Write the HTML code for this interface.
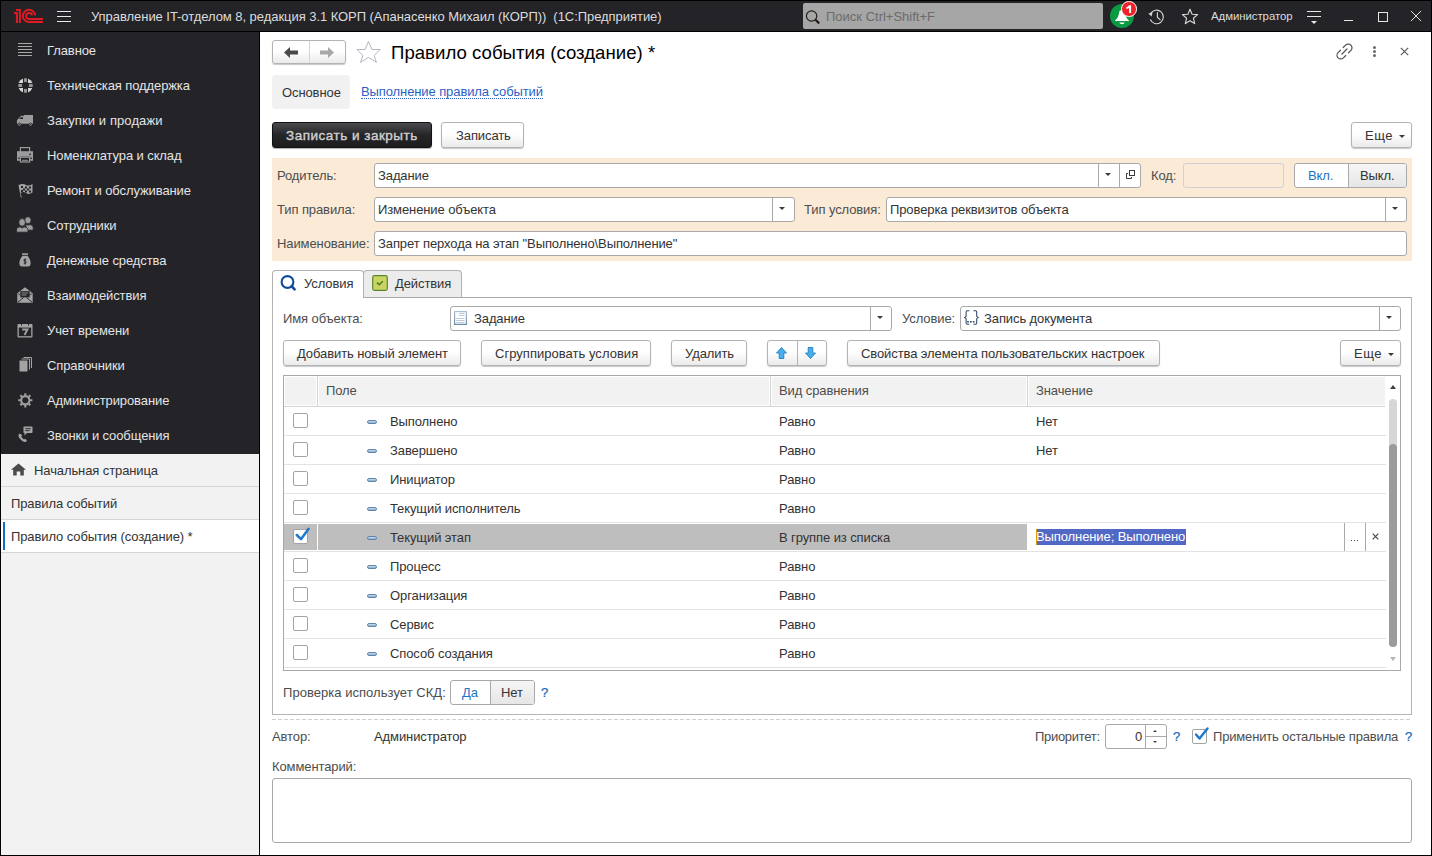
<!DOCTYPE html>
<html><head><meta charset="utf-8">
<style>
*{box-sizing:border-box;margin:0;padding:0}
html,body{width:1432px;height:856px;overflow:hidden;background:#000}
body{font-family:"Liberation Sans",sans-serif;font-size:13px;line-height:15px;color:#333;position:relative;letter-spacing:-0.1px}
.a{position:absolute}
svg{position:absolute;overflow:visible}
#top{left:1px;top:1px;width:1430px;height:30px;background:#232328}
#side{left:1px;top:32px;width:258px;height:422px;background:#232328}
#sidelow{left:1px;top:454px;width:258px;height:401px;background:#f2f2f2}
#main{left:260px;top:32px;width:1171px;height:823px;background:#fff}
.tt{color:#dcdcdc;white-space:nowrap;letter-spacing:-0.05px}
.si{position:absolute;color:#e4e4e4;white-space:nowrap;left:47px}
.lbl{position:absolute;color:#4d4d4d;white-space:nowrap}
.txt{position:absolute;color:#333;white-space:nowrap}
.inp{position:absolute;background:#fff;border:1px solid #a9a9a9;border-radius:3px}
.btn{position:absolute;background:linear-gradient(#fff 0%,#fff 45%,#ebebeb 100%);border:1px solid #b3b3b3;border-radius:3px;box-shadow:0 1px 1px rgba(0,0,0,.22);color:#333;white-space:nowrap}
.btn span{position:absolute;top:5px;white-space:nowrap}
.dd{position:absolute;top:-1px;bottom:-1px;width:22px;border-left:1px solid #a9a9a9}
.tri{position:absolute;width:0;height:0;border-left:3px solid transparent;border-right:3px solid transparent;border-top:3.5px solid #3a3a3a}
.row{position:absolute;left:284px;width:1102px;height:29px;border-bottom:1px solid #e3e3e3}
.cb{position:absolute;left:9px;top:6px;width:15px;height:15px;border:1px solid #a3a3a3;border-radius:2px;background:#fff}
.dsh{position:absolute;left:83px;top:13px;width:10px;height:4px;background:linear-gradient(#cfe0ee 0%,#86abcb 100%);border:1px solid #5d87aa;border-radius:2px}
.fn{position:absolute;left:106px;top:7px;color:#333;white-space:nowrap}
.vs{position:absolute;left:495px;top:7px;color:#333;white-space:nowrap}
.vl{position:absolute;left:752px;top:7px;color:#333;white-space:nowrap}
.q{position:absolute;color:#1266b8;white-space:nowrap;-webkit-text-stroke:0.2px #1266b8}
</style></head><body>
<div id="top" class="a"></div>
<div id="side" class="a"></div>
<div id="sidelow" class="a"></div>
<div id="main" class="a"></div>

<!-- 1C logo -->
<svg style="left:0;top:0" width="50" height="30" viewBox="0 0 50 30"><g fill="none" stroke="#e01b22" stroke-width="2" stroke-linejoin="miter">
<path d="M16 10 H19.9 V23"/><path d="M14 13 H16.9 V23"/>
<path d="M35.1 15.4 A6.1 6.1 0 1 0 29.2 22 H43"/>
<path d="M32.1 15.4 A3 3 0 1 0 29.2 19 H43"/>
</g></svg>
<!-- hamburger -->
<div class="a" style="left:57px;top:11px;width:14px;height:1px;background:#e8e8e8"></div>
<div class="a" style="left:57px;top:16px;width:14px;height:1px;background:#e8e8e8"></div>
<div class="a" style="left:57px;top:21px;width:14px;height:1px;background:#e8e8e8"></div>
<div class="a tt" style="left:91px;top:9px">Управление IT-отделом 8, редакция 3.1 КОРП (Апанасенко Михаил (КОРП))&nbsp; (1С:Предприятие)</div>
<!-- search -->
<div class="a" style="left:803px;top:3px;width:300px;height:26px;background:#a6a6a6;border-radius:2px"></div>
<svg style="left:805px;top:10px" width="16" height="14" viewBox="0 0 16 14"><circle cx="6.6" cy="6" r="5.2" fill="none" stroke="#1e1e1e" stroke-width="1.2"/><path d="M10.4 9.8 L14.2 13.4" stroke="#1e1e1e" stroke-width="2.2"/></svg>
<div class="a" style="left:826px;top:9px;color:#6b6b6b;font-size:13px;white-space:nowrap;letter-spacing:0">Поиск Ctrl+Shift+F</div>
<!-- bell -->
<div class="a" style="left:1110px;top:4px;width:24px;height:24px;border-radius:50%;background:#0a9a42"></div>
<svg style="left:1110px;top:4px" width="24" height="24" viewBox="0 0 24 24"><path d="M9.3 7.5 Q9.5 6 12 6 Q14.5 6 14.7 7.5 Q15 13 19 16.6 V17.1 H5 V16.6 Q9 13 9.3 7.5 Z" fill="#fff"/><path d="M9.2 18.6 H14.8 Q14 20.2 12 20.2 Q10 20.2 9.2 18.6 Z" fill="#fff"/></svg>
<div class="a" style="left:1121px;top:1px;width:15.5px;height:15.5px;border-radius:50%;background:#ee2228;border:1.3px solid #fff"></div>
<svg style="left:1124.6px;top:4px" width="8" height="10" viewBox="0 0 8 10"><path d="M4.1 1.2 H6.1 V8.9 H4.1 V3.9 Q3 4.6 1.3 4.9 V3.2 Q3.2 2.6 4.1 1.2 Z" fill="#fff"/></svg>
<!-- history -->
<svg style="left:1147px;top:8px" width="18" height="18" viewBox="0 0 18 18"><path d="M3.6 5.6 A6.8 6.8 0 1 1 3.3 11.6" fill="none" stroke="#d6d6d6" stroke-width="1.15"/><path d="M1.3 5.6 L5.6 4.2 L4.6 8.4 Z" fill="#d6d6d6"/><path d="M10.4 4.2 V9.2 L13.5 12.2" fill="none" stroke="#d6d6d6" stroke-width="1.15"/></svg>
<!-- star -->
<svg style="left:1181px;top:8px" width="18" height="17" viewBox="0 0 18 17"><path d="M9 1.2 L11.1 6.3 L16.6 6.6 L12.4 10.2 L13.7 15.6 L9 12.7 L4.3 15.6 L5.6 10.2 L1.4 6.6 L6.9 6.3 Z" fill="none" stroke="#d6d6d6" stroke-width="1.15" stroke-linejoin="round"/></svg>
<div class="a tt" style="left:1211px;top:9px;font-size:11.4px">Администратор</div>
<!-- filter icon -->
<div class="a" style="left:1307px;top:11px;width:14px;height:1px;background:#e6e6e6"></div>
<div class="a" style="left:1307px;top:16px;width:14px;height:1px;background:#e6e6e6"></div>
<div class="a" style="left:1311px;top:21px;width:0;height:0;border-left:3px solid transparent;border-right:3px solid transparent;border-top:3px solid #e6e6e6"></div>
<!-- window controls -->
<div class="a" style="left:1344px;top:20px;width:9px;height:1px;background:#e6e6e6"></div>
<div class="a" style="left:1378px;top:12px;width:10px;height:10px;border:1px solid #e6e6e6"></div>
<svg style="left:1410px;top:10px" width="12" height="12" viewBox="0 0 12 12"><path d="M1 1 L11 11 M11 1 L1 11" stroke="#e6e6e6" stroke-width="1"/></svg>
<div class="si" style="top:43px">Главное</div>
<div class="si" style="top:78px">Техническая поддержка</div>
<div class="si" style="top:113px;letter-spacing:0.1px">Закупки и продажи</div>
<div class="si" style="top:148px">Номенклатура и склад</div>
<div class="si" style="top:183px">Ремонт и обслуживание</div>
<div class="si" style="top:218px">Сотрудники</div>
<div class="si" style="top:253px">Денежные средства</div>
<div class="si" style="top:288px">Взаимодействия</div>
<div class="si" style="top:323px">Учет времени</div>
<div class="si" style="top:358px">Справочники</div>
<div class="si" style="top:393px">Администрирование</div>
<div class="si" style="top:428px">Звонки и сообщения</div>
<!-- sidebar icons -->
<svg style="left:18px;top:43px" width="14" height="14" viewBox="0 0 14 14"><g stroke="#a8a8a8" stroke-width="1"><path d="M0 0.5H14M0 3.5H14M0 6.5H14M0 9.5H14M0 12.5H14"/></g></svg>
<svg style="left:18px;top:78px" width="15" height="15" viewBox="0 0 15 15"><circle cx="7.5" cy="7.5" r="7.3" fill="#d6d6d6"/><rect x="5" y="0" width="5" height="15" fill="#232328"/><rect x="0" y="5" width="15" height="5" fill="#232328"/><g fill="#959595"><rect x="6" y="0.3" width="3" height="3.8"/><rect x="6" y="10.9" width="3" height="3.8"/><rect x="0.3" y="6" width="3.8" height="3"/><rect x="10.9" y="6" width="3.8" height="3"/></g></svg>
<svg style="left:14px;top:110px" width="22" height="20" viewBox="0 0 22 20"><path d="M2.9 10.2 L7.2 5.8 H10 V5 H19 V13.8 H2.9 Z" fill="#9c9c9c"/><path d="M6.9 7.2 H9 V9 H5.2 Z" fill="#232328"/><g fill="#9c9c9c" stroke="#232328" stroke-width="0.7"><circle cx="5.4" cy="14.6" r="1.5"/><circle cx="16.5" cy="14.6" r="1.5"/></g><circle cx="5.4" cy="14.6" r="0.5" fill="#232328"/><circle cx="16.5" cy="14.6" r="0.5" fill="#232328"/></svg>
<svg style="left:14px;top:144px" width="22" height="20" viewBox="0 0 22 20"><rect x="6.4" y="3.6" width="9.2" height="5" fill="none" stroke="#9c9c9c" stroke-width="1.2"/><rect x="3" y="7.2" width="16" height="9.6" fill="#9c9c9c"/><rect x="5.8" y="12.6" width="10.4" height="6" fill="#232328"/><rect x="6.4" y="13.2" width="9.2" height="4.8" fill="none" stroke="#9c9c9c" stroke-width="1.2"/><rect x="8" y="15.8" width="6" height="1" fill="#9c9c9c"/><rect x="15.3" y="9.6" width="1.5" height="1.5" fill="#232328"/><rect x="4.2" y="13.6" width="1.4" height="1.4" fill="#232328"/><rect x="16.4" y="13.6" width="1.4" height="1.4" fill="#232328"/></svg>
<svg style="left:18px;top:183px" width="15" height="15" viewBox="0 0 15 15"><path d="M0.5 2 Q5 0 8 2 Q11 3.5 14.5 1 V9.5 Q11 12 8 10 Q5 8 2.5 10 L3.8 14.5 L2.8 14.5 Z" fill="#a3a3a3"/><g fill="#232328"><rect x="3" y="3" width="2" height="2"/><rect x="7" y="3.5" width="2" height="2"/><rect x="11" y="3.5" width="2" height="2"/><rect x="5" y="5.5" width="2" height="2"/><rect x="9" y="5.5" width="2" height="2"/><rect x="3" y="7" width="2" height="2"/><rect x="7" y="7.5" width="2" height="2"/><rect x="11" y="7.5" width="2" height="2"/></g></svg>
<svg style="left:14px;top:214px" width="22" height="22" viewBox="0 0 22 22"><g fill="#9c9c9c" stroke="#232328" stroke-width="0.8"><ellipse cx="13.9" cy="6.2" rx="3.2" ry="3.5"/><path d="M11.5 10.6 Q13.9 11.4 16.3 10.6 Q19.2 11.4 19.2 13.2 V16.2 H13 Z"/><ellipse cx="8.1" cy="8.4" rx="3.3" ry="3.8"/><path d="M2.6 18.2 V15.2 Q2.8 13.3 6 12.8 L8.1 14 L10.2 12.8 Q13.6 13.3 14 15.2 V18.2 Z"/></g></svg>
<svg style="left:19px;top:253px" width="12" height="14" viewBox="0 0 12 14"><rect x="3" y="0.3" width="6" height="1.6" fill="#a3a3a3"/><path d="M3.5 2.8 H8.5 Q12 7 11.6 11 Q11.5 13.5 9 13.5 H3 Q0.5 13.5 0.4 11 Q0 7 3.5 2.8 Z" fill="#a3a3a3"/><path d="M7.3 6.8 Q6 6 4.9 6.9 Q4.5 8 6 8.3 Q7.5 8.7 7.2 9.8 Q6 10.8 4.7 10 M6 5.5 V11.5" fill="none" stroke="#232328" stroke-width="0.9"/></svg>
<svg style="left:17px;top:287px" width="16" height="16" viewBox="0 0 16 16"><path d="M0.3 6.3 L8 0.3 L15.7 6.3 V15.7 H0.3 Z" fill="#a3a3a3"/><rect x="3.3" y="4.2" width="9.4" height="6.2" fill="#232328"/><path d="M4.6 6 H11.2 M4.6 8 H9.5" stroke="#8c8c8c" stroke-width="1"/><path d="M0.8 15.2 L6.6 10.6 M15.2 15.2 L9.4 10.6" stroke="#232328" stroke-width="0.9"/><path d="M1.2 6.6 L3.3 8.3 M14.8 6.6 L12.7 8.3" stroke="#232328" stroke-width="0.8"/></svg>
<svg style="left:17px;top:322px" width="16" height="16" viewBox="0 0 16 16"><rect x="0.5" y="2" width="15" height="13.5" rx="1" fill="#a3a3a3"/><rect x="1.8" y="5.6" width="12.4" height="8.6" fill="#232328"/><path d="M4.5 0 V3.5 M11.5 0 V3.5" stroke="#232328" stroke-width="1"/><path d="M5.2 7.5 H10.5 L7.5 13" fill="none" stroke="#a3a3a3" stroke-width="1.8"/></svg>
<svg style="left:19px;top:357px" width="15" height="15" viewBox="0 0 15 15"><rect x="0.5" y="3.5" width="8" height="11" fill="#a3a3a3"/><path d="M2.5 2 H10.5 V12.5 M4.5 0.5 H12.5 V11" fill="none" stroke="#a3a3a3" stroke-width="1"/></svg>
<svg style="left:18px;top:392.5px" width="15" height="15" viewBox="0 0 15 15"><g stroke="#9c9c9c" stroke-width="2.1"><path d="M7.3 0.2V14.4M0.2 7.3H14.4M2.3 2.3L12.3 12.3M12.3 2.3L2.3 12.3"/></g><circle cx="7.3" cy="7.3" r="4.1" fill="none" stroke="#9c9c9c" stroke-width="2.2"/><circle cx="7.3" cy="7.3" r="3" fill="#232328"/></svg>
<svg style="left:17px;top:426px" width="16" height="17" viewBox="0 0 16 17"><path d="M2.8 7.5 Q0.5 9 2 11.5 Q4 14.8 7 16 Q9 16.5 10 14.8 L8.3 12.8 L7 13.5 Q5 12.3 4.2 10.2 L5.3 9.2 Z" fill="#a3a3a3"/><rect x="6.5" y="0.5" width="9" height="6.5" rx="0.8" fill="#a3a3a3"/><path d="M7.5 7 L7.5 9.5 L10 7 Z" fill="#a3a3a3"/><path d="M8.3 2.7 H13.8 M8.3 4.6 H12.5" stroke="#232328" stroke-width="0.9"/></svg>

<!-- open windows -->
<svg style="left:11px;top:463px" width="15" height="13" viewBox="0 0 15 13"><path d="M7.5 0.5 L15 6.8 H12.8 V12.5 H9.3 V8.5 H5.7 V12.5 H2.2 V6.8 H0 Z" fill="#4a4a4a"/></svg>
<div class="txt" style="left:34px;top:463px">Начальная страница</div>
<div class="a" style="left:1px;top:486px;width:258px;height:1px;background:#d6d6d6"></div>
<div class="txt" style="left:11px;top:496px">Правила событий</div>
<div class="a" style="left:1px;top:519px;width:258px;height:1px;background:#d6d6d6"></div>
<div class="a" style="left:1px;top:520px;width:258px;height:32px;background:#fff"></div>
<div class="a" style="left:3px;top:522px;width:2px;height:28px;background:#0d6fc9"></div>
<div class="txt" style="left:11px;top:529px">Правило события (создание) *</div>
<div class="a" style="left:1px;top:552px;width:258px;height:1px;background:#d6d6d6"></div>

<!-- nav -->
<div class="btn" style="left:272px;top:40px;width:74px;height:24px"></div>
<div class="a" style="left:309px;top:41px;width:1px;height:22px;background:#d4d4d4"></div>
<svg style="left:284px;top:47px" width="14" height="11" viewBox="0 0 14 11"><path d="M0 5.5 L6 0 V3.5 H14 V7.5 H6 V11 Z" fill="#4a4a4a"/></svg>
<svg style="left:320px;top:47px" width="14" height="11" viewBox="0 0 14 11"><path d="M14 5.5 L8 0 V3.5 H0 V7.5 H8 V11 Z" fill="#a8a8a8"/></svg>
<svg style="left:357px;top:41px" width="24" height="22" viewBox="0 0 24 22"><path d="M11.5 0.6 L15 8.5 H23 L17.2 14.5 L19.4 21.4 L11.5 16.4 L3.6 21.4 L5.8 14.5 L0 8.5 H8 Z" fill="none" stroke="#aeb6c0" stroke-width="1" stroke-linejoin="miter"/></svg>
<div class="a" style="left:391px;top:42px;font-size:18.6px;line-height:21px;color:#000;white-space:nowrap;letter-spacing:0.02px">Правило события (создание) *</div>
<!-- right icons -->
<svg style="left:1336px;top:43px" width="17" height="17" viewBox="0 0 17 17"><g fill="none" stroke="#555" stroke-width="1.25" stroke-linecap="round"><path d="M7.2 4.5 L9.6 2.1 A2.7 2.7 0 0 1 14.9 7.4 L12.5 9.8"/><path d="M9.8 12.5 L7.4 14.9 A2.7 2.7 0 0 1 2.1 9.6 L4.5 7.2"/><path d="M6 11 L11 6"/></g></svg>
<div class="a" style="left:1373px;top:46px;width:3.4px;height:3.4px;border-radius:50%;background:#6a6a6a"></div>
<div class="a" style="left:1373px;top:50px;width:3.4px;height:3.4px;border-radius:50%;background:#6a6a6a"></div>
<div class="a" style="left:1373px;top:54px;width:3.4px;height:3.4px;border-radius:50%;background:#6a6a6a"></div>
<svg style="left:1400px;top:47px" width="9" height="9" viewBox="0 0 9 9"><path d="M0.8 0.8 L8.2 8.2 M8.2 0.8 L0.8 8.2" stroke="#555" stroke-width="1.1"/></svg>
<!-- section tabs -->
<div class="a" style="left:272px;top:75px;width:78px;height:34px;background:#f1f1f1;border-radius:4px"></div>
<div class="txt" style="left:282px;top:85px">Основное</div>
<div class="a" style="left:361px;top:85px;color:#2d5fc4;white-space:nowrap;border-bottom:1px dotted #2d5fc4;line-height:13px">Выполнение правила событий</div>
<!-- command bar -->
<div class="a" style="left:272px;top:122px;width:160px;height:26px;border-radius:3px;background:linear-gradient(#4a4a4e,#262629 50%,#1d1d20);border:1px solid #111;box-shadow:0 1px 1px rgba(0,0,0,.3)"></div>
<div class="a" style="left:286px;top:128px;color:#d0d0d0;font-weight:normal;-webkit-text-stroke:0.4px #d0d0d0;white-space:nowrap;letter-spacing:0.5px;font-size:13.5px">Записать и закрыть</div>
<div class="btn" style="left:441px;top:122px;width:83px;height:26px"><span style="left:14px">Записать</span></div>
<div class="btn" style="left:1351px;top:122px;width:61px;height:26px"><span style="left:13px;letter-spacing:0.5px">Еще</span><div class="a" style="left:47px;top:12px;width:0;height:0;border-left:3px solid transparent;border-right:3px solid transparent;border-top:3px solid #3a3a3a"></div></div>

<div class="a" style="left:272px;top:158px;width:1140px;height:103px;background:#faead6"></div>
<div class="lbl" style="left:277px;top:168px">Родитель:</div>
<div class="inp" style="left:374px;top:163px;width:767px;height:25px"><div class="dd" style="left:723px"><div class="tri" style="left:6px;top:10px"></div></div><div class="dd" style="left:744px;width:22px"></div></div>
<svg style="left:1126px;top:170px" width="10" height="10" viewBox="0 0 10 10"><rect x="3.5" y="0.5" width="5" height="5" fill="none" stroke="#3a3a3a" stroke-width="1"/><path d="M2.2 3.5 H0.5 V8.5 H5.5 V7" fill="none" stroke="#3a3a3a" stroke-width="1"/></svg>
<div class="txt" style="left:378px;top:168px">Задание</div>
<div class="lbl" style="left:1151px;top:168px">Код:</div>
<div class="a" style="left:1183px;top:163px;width:101px;height:25px;border:1px solid #cfd1d4;border-radius:3px;background:#faead6"></div>
<div class="a" style="left:1294px;top:163px;width:113px;height:25px;border:1px solid #a9a9a9;border-radius:3px;background:#fff;overflow:hidden"><div class="a" style="left:53px;top:0;width:59px;height:23px;border-left:1px solid #a9a9a9;background:linear-gradient(#f6f6f6,#e6e6e6)"></div></div>
<div class="a" style="left:1308px;top:168px;color:#1f74c4;white-space:nowrap">Вкл.</div>
<div class="a" style="left:1360px;top:168px;color:#333;white-space:nowrap">Выкл.</div>

<div class="lbl" style="left:277px;top:202px">Тип правила:</div>
<div class="inp" style="left:374px;top:197px;width:421px;height:25px"><div class="dd" style="left:397px"><div class="tri" style="left:6px;top:10px"></div></div></div>
<div class="txt" style="left:378px;top:202px">Изменение объекта</div>
<div class="lbl" style="left:804px;top:202px">Тип условия:</div>
<div class="inp" style="left:886px;top:197px;width:521px;height:25px"><div class="dd" style="left:498px"><div class="tri" style="left:6px;top:10px"></div></div></div>
<div class="txt" style="left:890px;top:202px">Проверка реквизитов объекта</div>

<div class="lbl" style="left:277px;top:236px">Наименование:</div>
<div class="inp" style="left:374px;top:231px;width:1033px;height:25px"></div>
<div class="txt" style="left:378px;top:236px">Запрет перхода на этап "Выполнено\Выполнение"</div>

<!-- panel -->
<div class="a" style="left:272px;top:297px;width:1140px;height:418px;border:1px solid #b4b4b4;border-top-color:#a9a9a9"></div>
<div class="a" style="left:363px;top:270px;width:99px;height:28px;background:#ececec;border:1px solid #b0b0b0;border-bottom:1px solid #a9a9a9;border-radius:4px 4px 0 0"></div>
<div class="a" style="left:272px;top:270px;width:92px;height:28px;background:#fff;border:1px solid #b0b0b0;border-bottom:none;border-radius:4px 4px 0 0"></div>
<svg style="left:280px;top:275px" width="17" height="17" viewBox="0 0 17 17"><circle cx="7.5" cy="7" r="5.9" fill="none" stroke="#104c98" stroke-width="2.1"/><path d="M11.6 11.2 L14.6 14.4" stroke="#104c98" stroke-width="2.6" stroke-linecap="round"/></svg>
<div class="txt" style="left:304px;top:276px">Условия</div>
<svg style="left:372px;top:275px" width="16" height="16" viewBox="0 0 16 16"><rect x="0.7" y="0.7" width="14.6" height="14.6" rx="1.8" fill="#c9d465" stroke="#5d8628" stroke-width="1.2"/><path d="M5 7.6 L7.2 9.8 L10.8 6.2" fill="none" stroke="#4e7b20" stroke-width="1.5"/></svg>
<div class="txt" style="left:395px;top:276px">Действия</div>

<div class="lbl" style="left:283px;top:311px">Имя объекта:</div>
<div class="inp" style="left:450px;top:306px;width:442px;height:25px"><div class="dd" style="left:419px"><div class="tri" style="left:6px;top:10px"></div></div></div>
<svg style="left:454px;top:311px" width="13" height="14" viewBox="0 0 13 14"><defs><linearGradient id="dg" x1="0" y1="0" x2="0" y2="1"><stop offset="0" stop-color="#a9c1d6"/><stop offset="1" stop-color="#6d8aa5"/></linearGradient></defs><rect x="0.6" y="0.6" width="11.8" height="12.8" fill="#fff" stroke="url(#dg)" stroke-width="1.2"/><path d="M5.2 2.5H10.6M5.2 4.5H10.6M2.2 7.5H10.6M2.2 9.5H10.6M2.2 11.5H10.6" stroke="#b3c4d4" stroke-width="0.9"/></svg>
<div class="txt" style="left:474px;top:311px">Задание</div>
<div class="lbl" style="left:902px;top:311px">Условие:</div>
<div class="inp" style="left:960px;top:306px;width:441px;height:25px"><div class="dd" style="left:418px"><div class="tri" style="left:6px;top:10px"></div></div></div>
<svg style="left:963px;top:310px" width="16" height="15" viewBox="0 0 16 15"><g fill="none" stroke="#2c4866" stroke-width="1.05"><path d="M6.3 0.7 H4.2 Q3.1 0.7 3.1 1.9 V6.3 L1.6 7.5 L3.1 8.7 V13.1 Q3.1 14.3 4.2 14.3 H6.3"/><path d="M10.5 0.7 H12.6 Q13.7 0.7 13.7 1.9 V6.3 L15.2 7.5 L13.7 8.7 V13.1 Q13.7 14.3 12.6 14.3 H10.5"/></g><g fill="#2c4866"><rect x="4.2" y="11" width="1.6" height="1.6"/><rect x="7" y="11" width="1.6" height="1.6"/><rect x="9.8" y="11" width="1.6" height="1.6"/></g></svg>
<div class="txt" style="left:984px;top:311px">Запись документа</div>

<div class="btn" style="left:283px;top:340px;width:178px;height:26px"><span style="left:13px">Добавить новый элемент</span></div>
<div class="btn" style="left:481px;top:340px;width:170px;height:26px"><span style="left:13px;letter-spacing:0.03px">Сгруппировать условия</span></div>
<div class="btn" style="left:671px;top:340px;width:76px;height:26px"><span style="left:13px">Удалить</span></div>
<div class="btn" style="left:767px;top:340px;width:60px;height:26px"><div class="a" style="left:29px;top:0;width:1px;height:24px;background:#b3b3b3"></div></div>
<svg style="left:776px;top:347px" width="11" height="12" viewBox="0 0 11 12"><path d="M5.5 0.5 L10.5 6 H7.8 V11.5 H3.2 V6 H0.5 Z" fill="#49afea" stroke="#1e7fc2" stroke-width="0.9"/></svg>
<svg style="left:805px;top:347px" width="11" height="12" viewBox="0 0 11 12"><path d="M5.5 11.5 L10.5 6 H7.8 V0.5 H3.2 V6 H0.5 Z" fill="#49afea" stroke="#1e7fc2" stroke-width="0.9"/></svg>
<div class="btn" style="left:847px;top:340px;width:313px;height:26px"><span style="left:13px">Свойства элемента пользовательских настроек</span></div>
<div class="btn" style="left:1340px;top:340px;width:61px;height:26px"><span style="left:13px;letter-spacing:0.5px">Еще</span><div class="a" style="left:47px;top:12px;width:0;height:0;border-left:3px solid transparent;border-right:3px solid transparent;border-top:3px solid #3a3a3a"></div></div>

<div class="a" style="left:283px;top:375px;width:1118px;height:296px;border:1px solid #a9a9a9;background:#fff"></div>
<div class="a" style="left:285px;top:377px;width:1100px;height:28px;background:#f2f2f2"></div>
<div class="a" style="left:284px;top:406px;width:1101px;height:1px;background:#d2d2d2"></div>
<div class="a" style="left:316px;top:376px;width:3px;height:30px;background:#fff"></div><div class="a" style="left:317px;top:376px;width:1px;height:30px;background:#d4d4d4"></div>
<div class="a" style="left:769px;top:376px;width:3px;height:30px;background:#fff"></div><div class="a" style="left:770px;top:376px;width:1px;height:30px;background:#d4d4d4"></div>
<div class="a" style="left:1026px;top:376px;width:3px;height:30px;background:#fff"></div><div class="a" style="left:1027px;top:376px;width:1px;height:30px;background:#d4d4d4"></div>
<div class="lbl" style="left:326px;top:383px">Поле</div>
<div class="lbl" style="left:779px;top:383px">Вид сравнения</div>
<div class="lbl" style="left:1036px;top:383px">Значение</div>
<div class="row" style="top:407px"><div class="cb"></div><div class="dsh"></div><div class="fn">Выполнено</div><div class="vs">Равно</div><div class="vl">Нет</div></div>
<div class="row" style="top:436px"><div class="cb"></div><div class="dsh"></div><div class="fn">Завершено</div><div class="vs">Равно</div><div class="vl">Нет</div></div>
<div class="row" style="top:465px"><div class="cb"></div><div class="dsh"></div><div class="fn">Инициатор</div><div class="vs">Равно</div></div>
<div class="row" style="top:494px"><div class="cb"></div><div class="dsh"></div><div class="fn">Текущий исполнитель</div><div class="vs">Равно</div></div>
<div class="row" style="top:523px"><div class="a" style="left:0;top:1px;width:33px;height:26px;background:#bebebe"></div><div class="a" style="left:34px;top:1px;width:709px;height:26px;background:#bebebe"></div><div class="cb"></div><svg style="left:11px;top:4px" width="15" height="14" viewBox="0 0 15 14"><path d="M1.8 8 L6 12.2 L13.6 1.8" fill="none" stroke="#1d78d0" stroke-width="2.5" stroke-linecap="round" stroke-linejoin="round"/></svg><div class="dsh"></div><div class="fn">Текущий этап</div><div class="vs">В группе из списка</div></div>
<div class="row" style="top:552px"><div class="cb"></div><div class="dsh"></div><div class="fn">Процесс</div><div class="vs">Равно</div></div>
<div class="row" style="top:581px"><div class="cb"></div><div class="dsh"></div><div class="fn">Организация</div><div class="vs">Равно</div></div>
<div class="row" style="top:610px"><div class="cb"></div><div class="dsh"></div><div class="fn">Сервис</div><div class="vs">Равно</div></div>
<div class="row" style="top:639px"><div class="cb"></div><div class="dsh"></div><div class="fn">Способ создания</div><div class="vs">Равно</div></div>
<div class="a" style="left:1036px;top:529px;height:16px;background:#4f6bc6"></div>
<div class="a" style="left:1036px;top:529px;height:16px;padding:0 1px 0 0;background:#5169c5;color:#fff;white-space:nowrap;line-height:16px">Выполнение; Выполнено</div>
<div class="a" style="left:1036px;top:529px;width:1px;height:16px;background:#d9a000"></div>
<div class="a" style="left:1344px;top:523px;width:1px;height:28px;background:#a9a9a9"></div>
<div class="a" style="left:1365px;top:523px;width:1px;height:28px;background:#a9a9a9"></div>
<div class="a" style="left:1351px;top:540px;width:1.4px;height:1.4px;background:#444;box-shadow:3px 0 0 #444,6px 0 0 #444"></div>
<svg style="left:1372px;top:533px" width="7" height="7" viewBox="0 0 7 7"><path d="M0.7 0.7 L6.3 6.3 M6.3 0.7 L0.7 6.3" stroke="#444" stroke-width="1.1"/></svg>
<div class="a" style="left:1390px;top:385px;width:0;height:0;border-left:3px solid transparent;border-right:3px solid transparent;border-bottom:4px solid #404040"></div>
<div class="a" style="left:1389px;top:399px;width:8px;height:248px;border-radius:4px;background:#d6d6d6"></div>
<div class="a" style="left:1389px;top:444px;width:8px;height:203px;border-radius:4px;background:#9b9b9b"></div>
<div class="a" style="left:1390px;top:657px;width:0;height:0;border-left:3px solid transparent;border-right:3px solid transparent;border-top:4px solid #b5b5b5"></div>
<div class="lbl" style="left:283px;top:685px;letter-spacing:0.04px">Проверка использует СКД:</div>
<div class="a" style="left:450px;top:680px;width:85px;height:25px;border:1px solid #a9a9a9;border-radius:3px;background:#fff;overflow:hidden"><div class="a" style="left:39px;top:0;width:45px;height:23px;border-left:1px solid #a9a9a9;background:linear-gradient(#f6f6f6,#e6e6e6)"></div></div>
<div class="a" style="left:462px;top:685px;color:#1f74c4;white-space:nowrap">Да</div>
<div class="a" style="left:501px;top:685px;color:#333;white-space:nowrap">Нет</div>
<div class="q" style="left:541px;top:685px">?</div>
<div class="a" style="left:272px;top:719px;width:1140px;height:1px;background:repeating-linear-gradient(90deg,#cfcfcf 0,#cfcfcf 4px,transparent 4px,transparent 6px)"></div>
<div class="lbl" style="left:272px;top:729px">Автор:</div>
<div class="txt" style="left:374px;top:729px">Администратор</div>
<div class="lbl" style="left:1035px;top:729px;letter-spacing:-0.3px">Приоритет:</div>
<div class="inp" style="left:1105px;top:724px;width:62px;height:25px"><div class="a" style="left:39px;top:-1px;width:1px;height:25px;background:#a9a9a9"></div><div class="a" style="left:39px;top:11px;width:21px;height:1px;background:#a9a9a9"></div></div>
<div class="a" style="left:1153px;top:729.5px;width:0;height:0;border-left:2px solid transparent;border-right:2px solid transparent;border-bottom:2.5px solid #444"></div>
<div class="a" style="left:1153px;top:741px;width:0;height:0;border-left:2px solid transparent;border-right:2px solid transparent;border-top:2.5px solid #444"></div>
<div class="txt" style="left:1135px;top:729px">0</div>
<div class="q" style="left:1173px;top:729px">?</div>
<div class="a" style="left:1192px;top:729px;width:15px;height:15px;border:1px solid #a3a3a3;border-radius:2px;background:#fff"></div>
<svg style="left:1194px;top:727px" width="15" height="14" viewBox="0 0 15 14"><path d="M2 7.5 L5.5 11.5 L13.5 1.5" fill="none" stroke="#1d78d0" stroke-width="2.4" stroke-linecap="round" stroke-linejoin="round"/></svg>
<div class="lbl" style="left:1213px;top:729px;letter-spacing:-0.17px">Применить остальные правила</div>
<div class="q" style="left:1405px;top:729px">?</div>
<div class="lbl" style="left:272px;top:759px">Комментарий:</div>
<div class="inp" style="left:272px;top:778px;width:1140px;height:65px"></div>

</body></html>
